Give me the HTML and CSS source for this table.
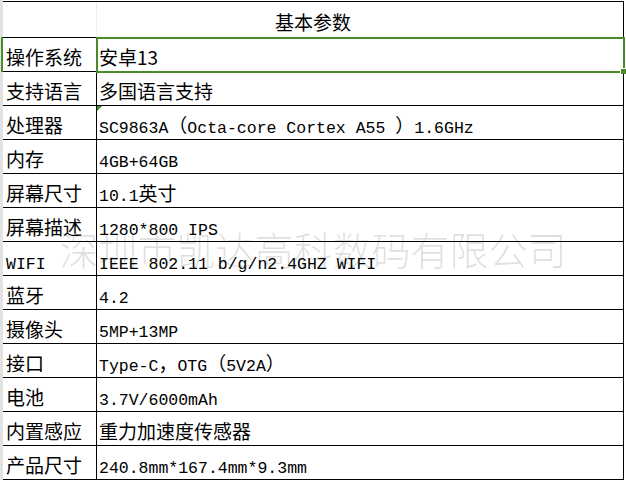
FILE: index.html
```html
<!DOCTYPE html>
<html lang="zh-CN">
<head>
<meta charset="utf-8">
<title>基本参数</title>
<link rel="stylesheet" href="styles.css">
</head>
<body>
<div class="sheet">
  <div class="gutter"></div>
  <div class="table">
    <div class="head">基本参数</div>
    <div class="row">
      <div class="label">操作系统</div>
      <div class="value selected">安卓13<span class="handle"></span></div>
    </div>
    <div class="row">
      <div class="label">支持语言</div>
      <div class="value">多国语言支持</div>
    </div>
    <div class="row">
      <div class="label">处理器</div>
      <div class="value flagged"><span class="en">SC9863A</span>（<span class="en">Octa-core Cortex A55 </span>）<span class="en">1.6GHz</span></div>
    </div>
    <div class="row">
      <div class="label">内存</div>
      <div class="value"><span class="en">4GB+64GB</span></div>
    </div>
    <div class="row">
      <div class="label">屏幕尺寸</div>
      <div class="value"><span class="en">10.1</span>英寸</div>
    </div>
    <div class="row">
      <div class="label">屏幕描述</div>
      <div class="value"><span class="en">1280*800 IPS</span></div>
    </div>
    <div class="row">
      <div class="label"><span class="en">WIFI</span></div>
      <div class="value"><span class="en">IEEE 802.11 b/g/n2.4GHZ WIFI</span></div>
    </div>
    <div class="row">
      <div class="label">蓝牙</div>
      <div class="value"><span class="en">4.2</span></div>
    </div>
    <div class="row">
      <div class="label">摄像头</div>
      <div class="value"><span class="en">5MP+13MP</span></div>
    </div>
    <div class="row">
      <div class="label">接口</div>
      <div class="value"><span class="en">Type-C</span>，<span class="en">OTG</span>（<span class="en">5V2A</span>）</div>
    </div>
    <div class="row">
      <div class="label">电池</div>
      <div class="value"><span class="en">3.7V/6000mAh</span></div>
    </div>
    <div class="row">
      <div class="label">内置感应</div>
      <div class="value">重力加速度传感器</div>
    </div>
    <div class="row">
      <div class="label">产品尺寸</div>
      <div class="value"><span class="en">240.8mm*167.4mm*9.3mm</span></div>
    </div>
  </div>
  <div class="row-mark"></div>
  <div class="watermark">深圳市凯达高科数码有限公司</div>
</div>
</body>
</html>
```

FILE: styles.css
```css
* {
  box-sizing: border-box;
}

html, body {
  margin: 0;
  padding: 0;
  background: #fff;
}

body {
  font-family: "Noto Sans CJK SC", "Noto Sans", sans-serif;
  font-size: 19px;
  color: #000;
}

.sheet {
  position: relative;
  display: flex;
  width: 626px;
  height: 480px;
  overflow: hidden;
}

.gutter {
  width: 3px;
  flex: none;
  background: #e2e2e2;
}

.table {
  width: 621px;
  margin-top: 1px;
  border-top: 1px solid #000;
  border-right: 1px solid #000;
  align-self: flex-start;
}

.head {
  height: 36px;
  border-bottom: 1px solid #000;
  text-align: center;
  padding-top: 4px;
  line-height: 31px;
  background-image: linear-gradient(#ececec, #ececec);
  background-size: 1px 100%;
  background-position: 93px 0;
  background-repeat: no-repeat;
}

.row {
  display: grid;
  grid-template-columns: 94px 1fr;
  height: 34px;
  border-bottom: 1px solid #000;
}

.label,
.value {
  display: block;
  padding-top: 4px;
  line-height: 29px;
  white-space: pre;
}

.label {
  border-right: 1px solid #000;
  padding-left: 3px;
}

.value {
  position: relative;
  padding-left: 2px;
}

.en {
  font-family: "Liberation Mono", "DejaVu Sans Mono", monospace;
  font-size: 16.5px;
}

.selected::after {
  content: "";
  position: absolute;
  top: -1px;
  left: -1px;
  right: -2px;
  bottom: -2px;
  border: 2px solid #4a8b28;
}

.handle {
  position: absolute;
  right: -3px;
  bottom: -3px;
  width: 6px;
  height: 6px;
  background: #4a8b28;
  border-left: 1px solid #fff;
  border-top: 1px solid #fff;
  z-index: 2;
}

.flagged::before {
  content: "";
  position: absolute;
  top: 0;
  left: 0;
  border-top: 5px solid #3d8a1e;
  border-right: 5px solid transparent;
}

.row-mark {
  position: absolute;
  left: 1px;
  top: 37px;
  width: 2px;
  height: 35px;
  background: #4a8b28;
}

.watermark {
  position: absolute;
  left: 0;
  right: 0;
  top: 229px;
  text-align: center;
  font-size: 39px;
  font-weight: 300;
  line-height: 1;
  color: rgba(0, 0, 0, 0.13);
  pointer-events: none;
  white-space: nowrap;
}
```
